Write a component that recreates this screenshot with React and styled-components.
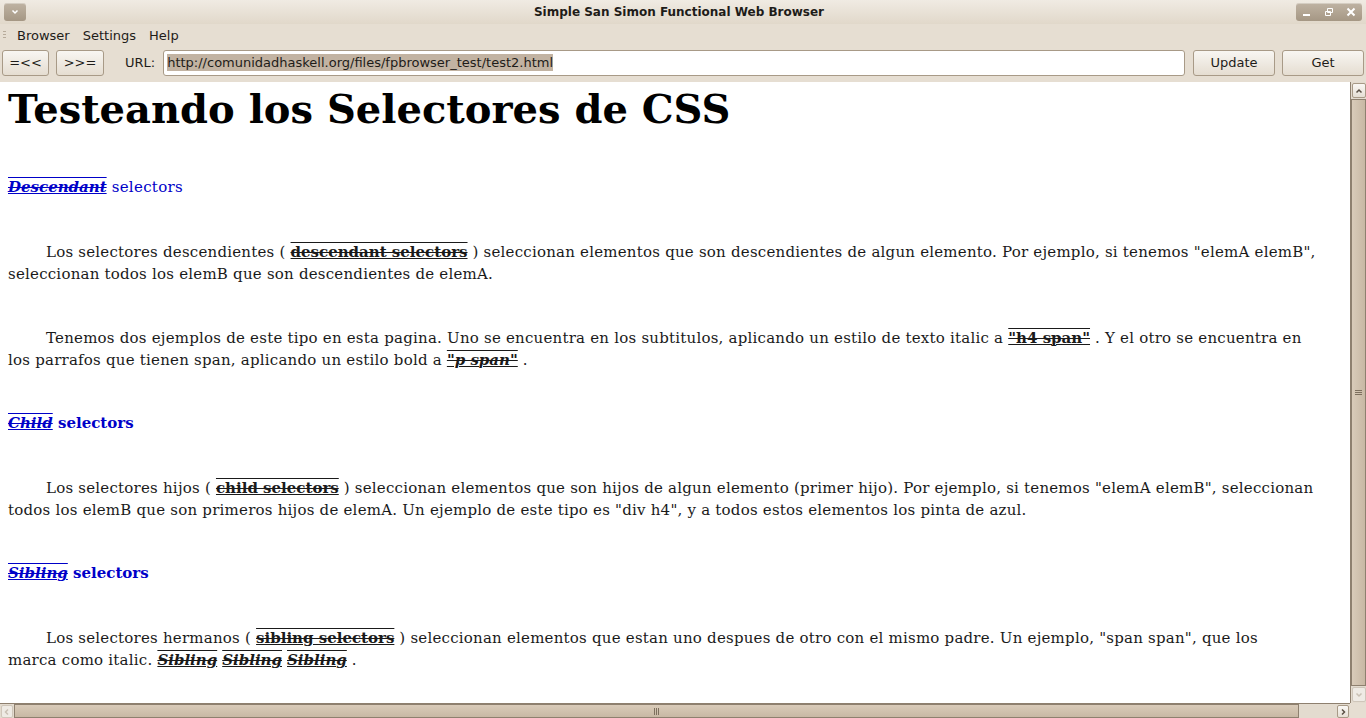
import styled, { createGlobalStyle } from "styled-components";

const Global = createGlobalStyle`
    html, body {
        margin: 0;
        padding: 0;
        overflow: hidden;
    }
    body {
        font-family: "DejaVu Sans", sans-serif;
        background: #e6ded2;
    }
`;

const Window = styled.div`
    display: flex;
    flex-direction: column;
    width: 1366px;
    height: 718px;
    background: #e6ded2;
`;

const TitleBar = styled.div`
    height: 24px;
    display: flex;
    align-items: center;
    justify-content: space-between;
    padding: 0 4px;
    background: linear-gradient(#f0ebe3, #e1d8ca);
`;

const Title = styled.div`
    font-size: 12px;
    font-weight: bold;
    color: #1e1c19;
    margin-left: 36px;
`;

const WinButton = styled.div`
    height: 18px;
    display: flex;
    align-items: center;
    justify-content: ${(p) => (p.group ? "space-around" : "center")};
    width: ${(p) => (p.group ? "66px" : "22px")};
    border-radius: 3px;
    background: linear-gradient(#bfb3a3, #a59784);
    box-shadow: inset 0 1px 0 rgba(255, 255, 255, 0.35);
`;

const MenuBar = styled.div`
    height: 22px;
    display: flex;
    align-items: center;
    padding-left: 3px;
    font-size: 13px;
    color: #1e1c19;
`;

const Grip = styled.div`
    width: 3px;
    height: 8px;
    margin-right: 6px;
    background: repeating-linear-gradient(#b7ab9b 0 1px, transparent 1px 3px);
`;

const MenuItem = styled.span`
    padding: 0 8px 0 5px;
`;

const ToolBar = styled.div`
    height: 33px;
    display: flex;
    align-items: center;
    gap: 7px;
    padding: 0 2px;
`;

const Button = styled.div`
    height: 26px;
    box-sizing: border-box;
    width: ${(p) => p.w}px;
    display: flex;
    align-items: center;
    justify-content: center;
    border: 1px solid #a89a87;
    border-radius: 3px;
    background: linear-gradient(#f8f6f2, #e5ddd1);
    font-size: 13px;
    color: #1e1c19;
`;

const Label = styled.span`
    font-size: 13px;
    color: #1e1c19;
    margin: 0 1px 0 14px;
`;

const UrlField = styled.div`
    flex: 1;
    height: 26px;
    box-sizing: border-box;
    display: flex;
    align-items: center;
    padding-left: 3px;
    margin-right: 1px;
    border: 1px solid #a89a87;
    border-radius: 3px;
    background: #fff;
    font-size: 13px;
    color: #1e1c19;
`;

const Selected = styled.span`
    background: #c2b3a2;
    padding: 1px 0;
`;

const Content = styled.div`
    flex: 1;
    display: grid;
    grid-template-columns: 1fr 16px;
    grid-template-rows: 1fr 15px;
    margin-top: 3px;
    min-height: 0;
`;

const Page = styled.div`
    background: #fff;
    overflow: hidden;
    padding: 0 8px;
    font-family: "DejaVu Serif", serif;
    color: #1a1a1a;
`;

const H1 = styled.h1`
    font-size: 40px;
    font-weight: bold;
    color: #000;
    margin: 2px 0 0;
    line-height: 50px;
`;

const H4 = styled.h4`
    font-size: 15px;
    color: #0000c8;
    font-weight: ${(p) => (p.light ? "normal" : "bold")};
    margin: ${(p) => p.top}px 0 0;
    line-height: 20px;
    letter-spacing: ${(p) => (p.light ? "0.3px" : "0")};
`;

const Deco = styled.span`
    font-weight: bold;
    font-style: ${(p) => (p.italic ? "italic" : "normal")};
    letter-spacing: 0;
    text-decoration: overline underline line-through;
    text-decoration-thickness: 1px;
`;

const Para = styled.p`
    font-size: 15px;
    letter-spacing: 0.22px;
    line-height: 22px;
    text-indent: 38px;
    margin: ${(p) => p.top}px 0 0;
    white-space: nowrap;
`;

const VScroll = styled.div`
    display: flex;
    flex-direction: column;
    background: #e3dbcf;
    border-left: 1px solid #8e806f;
`;

const HScroll = styled.div`
    display: flex;
    background: #e3dbcf;
    border-top: 1px solid #8e806f;
`;

const Corner = styled.div`
    background: #e6ded2;
`;

const Arrow = styled.div`
    width: ${(p) => (p.h ? "12px" : "14px")};
    height: ${(p) => (p.h ? "13px" : "15px")};
    margin: 1px;
    display: flex;
    align-items: center;
    justify-content: center;
    border-radius: 2px;
    background: ${(p) => (p.dim ? "#efebe5" : "linear-gradient(#faf8f5, #e6dfd4)")};
    border: 1px solid ${(p) => (p.dim ? "#cfc6ba" : "#a89a87")};
    box-sizing: border-box;
`;

const Thumb = styled.div`
    flex: ${(p) => (p.grow ? 1 : "none")};
    width: ${(p) => p.w || "auto"};
    display: flex;
    align-items: center;
    justify-content: center;
    background: ${(p) =>
        p.h
            ? "linear-gradient(#d9cbb9, #c8b8a4)"
            : "linear-gradient(90deg, #d9cbb9, #c8b8a4)"};
    border: 1px solid #8e806f;
    box-sizing: border-box;
`;

const Track = styled.div`
    flex: 1;
`;

const GripLines = styled.div`
    width: ${(p) => (p.h ? "6px" : "7px")};
    height: ${(p) => (p.h ? "7px" : "6px")};
    background: ${(p) =>
        p.h
            ? "repeating-linear-gradient(90deg, #7d6f5e 0 1px, transparent 1px 2px)"
            : "repeating-linear-gradient(#7d6f5e 0 1px, transparent 1px 2px)"};
`;

const Chevron = ({ d, color = "#5a5045", size = 8 }) => (
    <svg width={size} height={size} viewBox='0 0 8 8'>
        <path d={d} fill='none' stroke={color} strokeWidth='1.5' />
    </svg>
);

const App = () => {
    return (
        <Window>
            <Global />
            <TitleBar>
                <WinButton>
                    <Chevron d='M1.5 2.5 L4 5 L6.5 2.5' color='#fff' />
                </WinButton>
                <Title>Simple San Simon Functional Web Browser</Title>
                <WinButton group>
                    <svg width='10' height='10' viewBox='0 0 10 10'>
                        <rect x='1' y='7' width='7' height='2' fill='#fff' />
                    </svg>
                    <svg width='10' height='10' viewBox='0 0 10 10'>
                        <path d='M3.5 1.5h5v4h-5z M1.5 4.5h5v4h-5z' fill='none' stroke='#fff' strokeWidth='1' />
                    </svg>
                    <svg width='10' height='10' viewBox='0 0 10 10'>
                        <path d='M1.5 1.5 L8.5 8.5 M8.5 1.5 L1.5 8.5' stroke='#fff' strokeWidth='2' />
                    </svg>
                </WinButton>
            </TitleBar>
            <MenuBar>
                <Grip />
                <MenuItem>Browser</MenuItem>
                <MenuItem>Settings</MenuItem>
                <MenuItem>Help</MenuItem>
            </MenuBar>
            <ToolBar>
                <Button w={47}>=&lt;&lt;</Button>
                <Button w={48}>&gt;&gt;=</Button>
                <Label>URL:</Label>
                <UrlField>
                    <Selected>http://comunidadhaskell.org/files/fpbrowser_test/test2.html</Selected>
                </UrlField>
                <Button w={82}>Update</Button>
                <Button w={82}>Get</Button>
            </ToolBar>
            <Content>
                <Page>
                    <H1>Testeando los Selectores de CSS</H1>
                    <H4 top={43} light>
                        <Deco italic>Descendant</Deco> selectors
                    </H4>
                    <Para top={44}>
                        Los selectores descendientes ( <Deco>descendant selectors</Deco> ) seleccionan elementos que son descendientes de algun elemento. Por ejemplo, si tenemos "elemA elemB",
                        <br />
                        seleccionan todos los elemB que son descendientes de elemA.
                    </Para>
                    <Para top={42}>
                        Tenemos dos ejemplos de este tipo en esta pagina. Uno se encuentra en los subtitulos, aplicando un estilo de texto italic a <Deco>"h4 span"</Deco> . Y el otro se encuentra en
                        <br />
                        los parrafos que tienen span, aplicando un estilo bold a <Deco italic>"p span"</Deco> .
                    </Para>
                    <H4 top={42}>
                        <Deco italic>Child</Deco> selectors
                    </H4>
                    <Para top={44}>
                        Los selectores hijos ( <Deco>child selectors</Deco> ) seleccionan elementos que son hijos de algun elemento (primer hijo). Por ejemplo, si tenemos "elemA elemB", seleccionan
                        <br />
                        todos los elemB que son primeros hijos de elemA. Un ejemplo de este tipo es "div h4", y a todos estos elementos los pinta de azul.
                    </Para>
                    <H4 top={42}>
                        <Deco italic>Sibling</Deco> selectors
                    </H4>
                    <Para top={44}>
                        Los selectores hermanos ( <Deco>sibling selectors</Deco> ) seleccionan elementos que estan uno despues de otro con el mismo padre. Un ejemplo, "span span", que los
                        <br />
                        marca como italic. <Deco italic>Sibling</Deco> <Deco italic>Sibling</Deco> <Deco italic>Sibling</Deco> .
                    </Para>
                </Page>
                <VScroll>
                    <Arrow>
                        <Chevron d='M1.5 5.5 L4 3 L6.5 5.5' />
                    </Arrow>
                    <Thumb grow>
                        <GripLines />
                    </Thumb>
                    <Arrow dim>
                        <Chevron d='M1.5 2.5 L4 5 L6.5 2.5' color='#c9c0b4' />
                    </Arrow>
                </VScroll>
                <HScroll>
                    <Arrow h dim>
                        <Chevron d='M5 1.5 L2.5 4 L5 6.5' color='#c9c0b4' />
                    </Arrow>
                    <Thumb h w='1285px'>
                        <GripLines h />
                    </Thumb>
                    <Track />
                    <Arrow h>
                        <Chevron d='M3 1.5 L5.5 4 L3 6.5' />
                    </Arrow>
                </HScroll>
                <Corner />
            </Content>
        </Window>
    );
};

export default App;
